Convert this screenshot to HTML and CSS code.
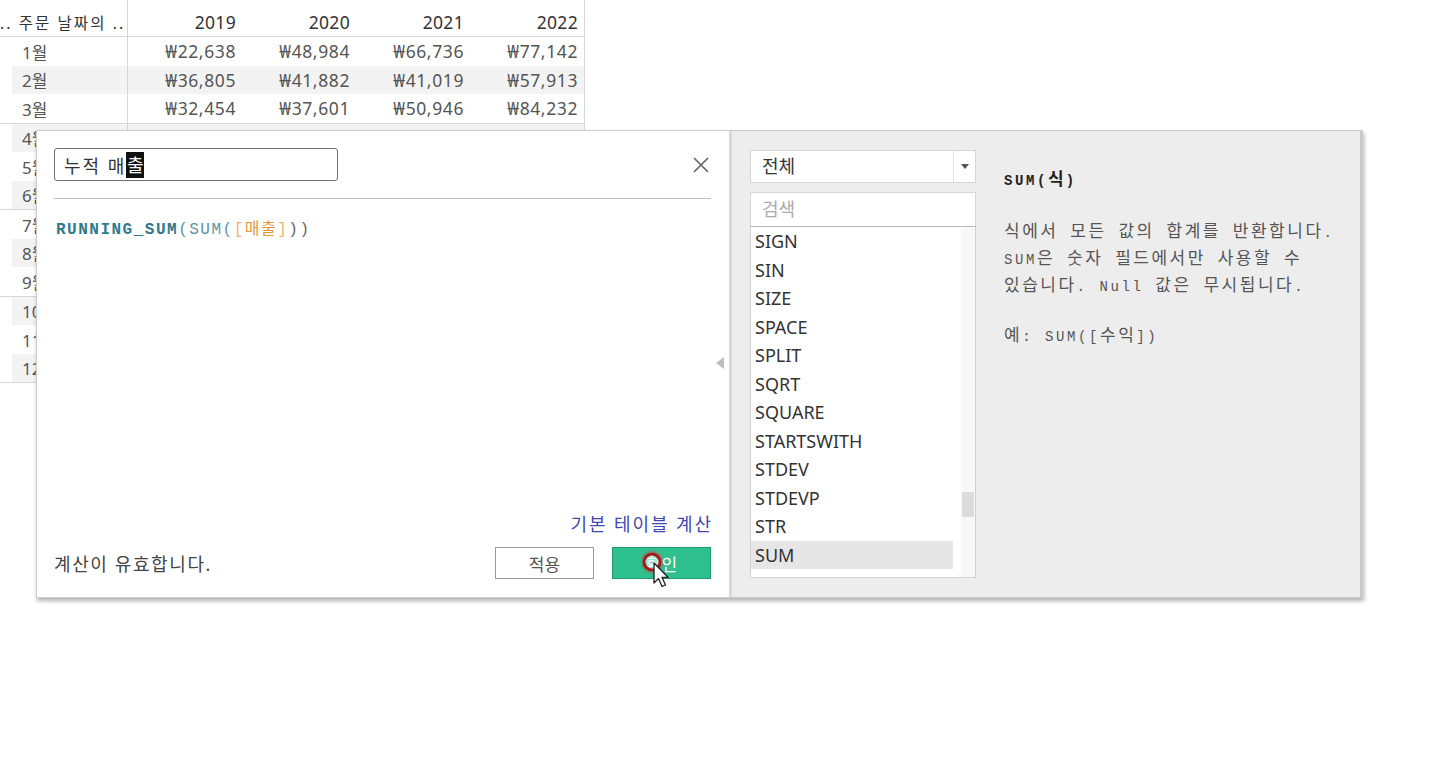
FILE: index.html
```html
<!DOCTYPE html>
<html lang="ko">
<head>
<meta charset="utf-8">
<title>계산된 필드</title>
<link rel="stylesheet" href="styles.css">
</head>
<body>
<div class="pivot">
  <div class="prow cap"><div class="c0"></div><div class="capcell">주문 날짜</div></div>
  <div class="prow head"><div class="c0">.. 주문 날짜의 ..</div><div class="c">2019</div><div class="c">2020</div><div class="c">2021</div><div class="c">2022</div></div>
  <div class="grp">
    <div class="prow"><div class="c0">1월</div><div class="c">₩22,638</div><div class="c">₩48,984</div><div class="c">₩66,736</div><div class="c">₩77,142</div></div>
    <div class="prow alt"><div class="c0">2월</div><div class="c">₩36,805</div><div class="c">₩41,882</div><div class="c">₩41,019</div><div class="c">₩57,913</div></div>
    <div class="prow"><div class="c0">3월</div><div class="c">₩32,454</div><div class="c">₩37,601</div><div class="c">₩50,946</div><div class="c">₩84,232</div></div>
  </div>
  <div class="grp">
    <div class="prow alt"><div class="c0">4월</div><div class="c">₩28,295</div><div class="c">₩34,195</div><div class="c">₩39,734</div><div class="c">₩46,170</div></div>
    <div class="prow"><div class="c0">5월</div><div class="c">₩23,648</div><div class="c">₩30,132</div><div class="c">₩56,988</div><div class="c">₩71,284</div></div>
    <div class="prow alt"><div class="c0">6월</div><div class="c">₩34,595</div><div class="c">₩24,797</div><div class="c">₩40,345</div><div class="c">₩53,912</div></div>
  </div>
  <div class="grp">
    <div class="prow"><div class="c0">7월</div><div class="c">₩33,946</div><div class="c">₩28,765</div><div class="c">₩39,261</div><div class="c">₩45,264</div></div>
    <div class="prow alt"><div class="c0">8월</div><div class="c">₩27,909</div><div class="c">₩36,898</div><div class="c">₩31,115</div><div class="c">₩63,120</div></div>
    <div class="prow"><div class="c0">9월</div><div class="c">₩81,777</div><div class="c">₩64,596</div><div class="c">₩73,410</div><div class="c">₩87,867</div></div>
  </div>
  <div class="grp">
    <div class="prow alt"><div class="c0">10월</div><div class="c">₩31,453</div><div class="c">₩31,404</div><div class="c">₩59,688</div><div class="c">₩77,777</div></div>
    <div class="prow"><div class="c0">11월</div><div class="c">₩78,629</div><div class="c">₩75,973</div><div class="c">₩79,412</div><div class="c">₩118,448</div></div>
    <div class="prow alt"><div class="c0">12월</div><div class="c">₩69,546</div><div class="c">₩74,919</div><div class="c">₩96,999</div><div class="c">₩83,829</div></div>
  </div>
</div>

<div class="dialog">
  <div class="editor">
    <div class="name-row">
      <div class="name-input">누적 매<span class="selch">출</span></div>
      <svg class="close" width="18" height="18" viewBox="0 0 18 18"><path d="M2 2 L16 16 M16 2 L2 16" stroke="#666" stroke-width="1.7" fill="none"/></svg>
    </div>
    <div class="divider"></div>
    <div class="formula"><span class="f-fn">RUNNING_SUM</span><span class="f-agg">(SUM(</span><span class="f-br">[</span><span class="f-field">매출</span><span class="f-br">]</span><span class="f-par">))</span></div>
    <div class="spacer"></div>
    <div class="link-row"><span class="link">기본 테이블 계산</span></div>
    <div class="bottom-row">
      <span class="status">계산이 유효합니다.</span>
      <div class="btns">
        <div class="btn apply">적용</div>
        <div class="btn ok">확인
          <svg class="cursor" width="44" height="46" viewBox="0 0 44 46">
            <circle cx="11" cy="13" r="8" fill="rgba(255,255,255,0.55)" stroke="#a3191c" stroke-width="3"/>
            <circle cx="11" cy="13" r="10.5" fill="none" stroke="rgba(220,60,60,0.35)" stroke-width="2"/>
            <path d="M13 14 L13 34 L17.5 29.5 L21 37.5 L24.5 36 L21 28.3 L27 28.3 Z" fill="#fff" stroke="#222" stroke-width="1.3" stroke-linejoin="round"/>
          </svg>
        </div>
      </div>
    </div>
    <div class="collapse"></div>
  </div>
  <div class="ref">
    <div class="fcol">
      <div class="select"><div class="val">전체</div><div class="arr"><span class="tri"></span></div></div>
      <div class="search">검색</div>
      <div class="list">
        <div class="items">
          <div class="item">SIGN</div>
          <div class="item">SIN</div>
          <div class="item">SIZE</div>
          <div class="item">SPACE</div>
          <div class="item">SPLIT</div>
          <div class="item">SQRT</div>
          <div class="item">SQUARE</div>
          <div class="item">STARTSWITH</div>
          <div class="item">STDEV</div>
          <div class="item">STDEVP</div>
          <div class="item">STR</div>
          <div class="item sel">SUM</div>
          <div class="item">TAN</div>
        </div>
        <div class="sbar"><div class="thumb"></div></div>
      </div>
    </div>
    <div class="help">
      <div class="htitle"><span class="m">SUM(</span>식<span class="m">)</span></div>
      <div class="hdesc">식에서 모든 값의 합계를 반환합니다<span class="m">.</span><br><span class="m">SUM</span>은 숫자 필드에서만 사용할 수<br>있습니다<span class="m">.</span> <span class="m">Null</span> 값은 무시됩니다<span class="m">.</span></div>
      <div class="hex">예<span class="m">:</span> <span class="m">SUM([</span>수익<span class="m">])</span></div>
    </div>
  </div>
</div>
</body>
</html>
```

FILE: styles.css
```css
* { box-sizing: border-box; }
html, body { margin: 0; padding: 0; background: #fff; }
body {
  width: 1440px;
  height: 773px;
  overflow: hidden;
  position: relative;
  font-family: "Noto Sans", "Noto Sans CJK KR", sans-serif;
  color: #333;
}

/* background pivot table */
.pivot {
  width: 585px;
  margin-top: -20px;
  border-right: 1px solid #d6d6d6;
}
.prow { display: flex; height: 28.5px; }
.prow .c0 {
  width: 128px;
  border-right: 1px solid #d6d6d6;
  padding-left: 22px;
  display: flex;
  align-items: center;
  font-size: 17px;
  color: #555;
  white-space: nowrap;
  overflow: hidden;
}
.prow .c {
  width: 114px;
  display: flex;
  align-items: center;
  justify-content: flex-end;
  padding-right: 6px;
  font-size: 17.5px;
  letter-spacing: 0.6px;
  color: #555;
}
.cap { height: 28px; }
.capcell { flex: 1; text-align: center; font-size: 15px; color: #555; line-height: 14px; }
.head { height: 29px; border-bottom: 1px solid #d6d6d6; }
.head .c0 { padding-left: 0; font-size: 15.5px; letter-spacing: 2.1px; color: #333; }
.head .c { color: #333; letter-spacing: 0.3px; }
.grp { border-bottom: 1px solid #d6d6d6; }
.alt { background: linear-gradient(to right, transparent 12px, #f3f3f3 12px); }

/* dialog */
.dialog {
  position: absolute;
  left: 36px;
  top: 130px;
  width: 1327px;
  height: 468px;
  display: flex;
  background: #fff;
  border: 1px solid #cdcdcd;
  box-shadow: 1px 3px 4px rgba(0, 0, 0, 0.3);
}
.editor {
  width: 692px;
  position: relative;
  display: flex;
  flex-direction: column;
  padding: 17px 18px 18px 17px;
}
.name-row { display: flex; align-items: center; justify-content: space-between; height: 33px; }
.name-input {
  width: 284px;
  height: 33px;
  border: 1px solid #6f6f6f;
  border-radius: 3px;
  padding-left: 9px;
  display: flex;
  align-items: center;
  font-size: 18px;
  letter-spacing: 2px;
  color: #333;
  white-space: pre;
}
.selch {
  background: #111;
  color: #fff;
  height: 26px;
  line-height: 26px;
  display: inline-block;
  letter-spacing: 0;
  padding: 0 0.5px;
}
.close { margin-right: 1px; }
.divider { margin-top: 17px; height: 1px; background: #bdbdbd; }
.formula {
  margin-top: 21px;
  line-height: 20px;
  padding-left: 2px;
  font-family: "Liberation Mono", "Noto Sans CJK KR", monospace;
  font-size: 16px;
  letter-spacing: 1.5px;
}
.f-fn { color: #2f7a8c; font-weight: bold; }
.f-agg { color: #5f93a6; }
.f-br { color: #f0b078; }
.f-field { color: #e8923a; }
.f-par { color: #666; }
.spacer { flex: 1; }
.link-row { text-align: right; line-height: 24px; margin-bottom: 10px; }
.link { font-size: 18px; letter-spacing: 1.9px; margin-right: -2px; color: #3f47b4; }
.bottom-row { display: flex; align-items: center; justify-content: space-between; height: 32px; }
.status { font-size: 18px; letter-spacing: 1.6px; color: #444; }
.btns { display: flex; gap: 18px; }
.btn {
  width: 99px;
  height: 32px;
  display: flex;
  align-items: center;
  justify-content: center;
  font-size: 17px;
  position: relative;
}
.apply { border: 1px solid #9a9a9a; color: #555; background: #fff; }
.ok { background: #2ec08e; border: 1px solid #229b70; color: #fff; }
.cursor { position: absolute; left: 28px; top: 1px; }
.collapse {
  position: absolute;
  right: 5px;
  top: 226px;
  width: 0;
  height: 0;
  border-right: 8px solid #bdbdbd;
  border-top: 6px solid transparent;
  border-bottom: 6px solid transparent;
}

/* reference panel */
.ref {
  flex: 1;
  background: #ededed;
  border-left: 3px solid #d9d9d9;
  border-right: 2px solid #c9c9c9;
  padding: 19px 0 19px 18px;
  display: flex;
}
.fcol { width: 226px; display: flex; flex-direction: column; }
.select {
  height: 33px;
  background: #fff;
  border: 1px solid #d6d6d6;
  display: flex;
}
.select .val { flex: 1; padding-left: 11px; font-size: 18px; line-height: 31px; color: #333; }
.select .arr {
  width: 22px;
  border-left: 1px solid #e2e2e2;
  display: flex;
  align-items: center;
  justify-content: center;
}
.tri {
  width: 0;
  height: 0;
  border-top: 5px solid #555;
  border-left: 4px solid transparent;
  border-right: 4px solid transparent;
}
.search {
  margin-top: 9px;
  height: 34px;
  background: #fff;
  border: 1px solid #d6d6d6;
  border-bottom: none;
  padding-left: 11px;
  font-size: 18px;
  line-height: 33px;
  color: #aaa;
}
.list {
  flex: 1;
  background: #fff;
  border: 1px solid #d0d0d0;
  border-top: 1px solid #b8b8b8;
  display: flex;
  overflow: hidden;
}
.items { flex: 1; padding-right: 8px; }
.item {
  height: 28.5px;
  line-height: 28.5px;
  padding-left: 4px;
  font-size: 18px;
  color: #333;
}
.item.sel { background: #e6e6e6; }
.sbar { width: 14px; background: #f8f8f8; position: relative; }
.thumb { position: absolute; top: 265px; height: 25px; left: 1px; right: 1px; background: #dcdcdc; }

.help {
  margin-left: 28px;
  font-family: "Noto Sans CJK KR", sans-serif;
  font-size: 17px;
  color: #555;
  letter-spacing: 2.5px;
  word-spacing: 4.6px;
}
.help .m { font-family: "Liberation Mono", monospace; font-size: 14px; line-height: 1; letter-spacing: 2.6px; }
.htitle { margin-top: 18px; height: 20px; line-height: 20px; font-weight: bold; color: #222; letter-spacing: 2px; }
.hdesc { margin-top: 27.5px; line-height: 27px; }
.hex { margin-top: 23px; line-height: 27px; }
```
